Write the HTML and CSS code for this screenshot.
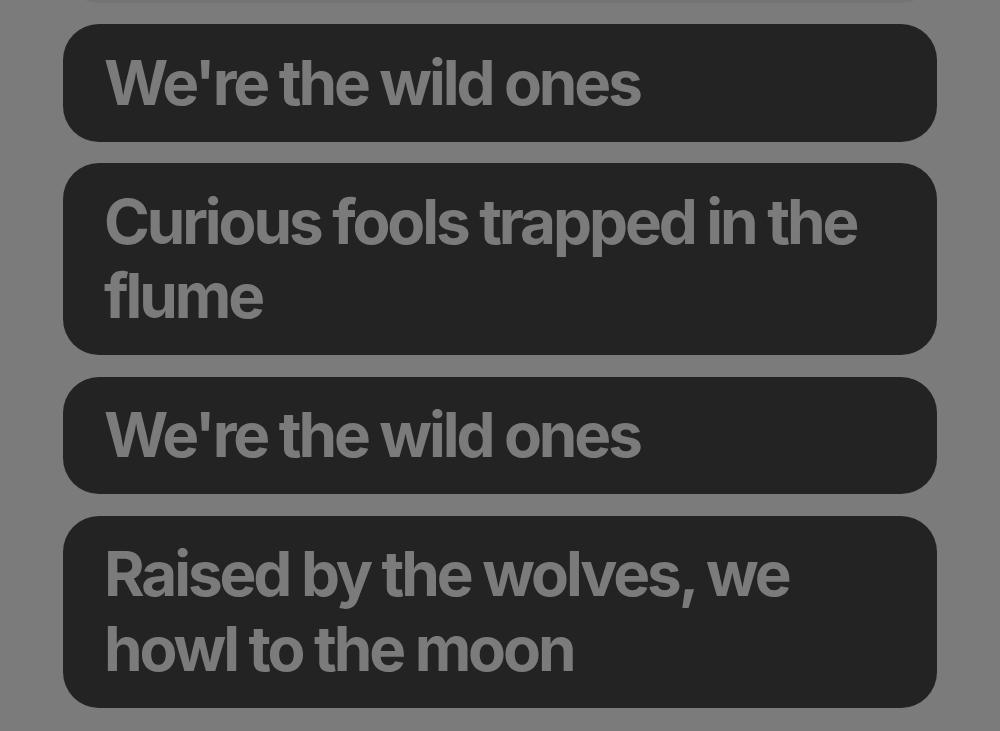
FILE: index.html
```html
<!DOCTYPE html>
<html lang="en">
<head>
<meta charset="utf-8">
<title>Lyrics</title>
<link rel="stylesheet" href="styles.css">
</head>
<body>
<main class="lyrics">
  <div class="line line-past" aria-hidden="true"></div>
  <div class="line"><span>We're the wild ones</span></div>
  <div class="line"><span>Curious fools trapped in the flume</span></div>
  <div class="line"><span>We're the wild ones</span></div>
  <div class="line"><span>Raised by the wolves, we howl to the moon</span></div>
</main>
</body>
</html>
```

FILE: styles.css
```css
html, body {
  margin: 0;
  padding: 0;
  background: #7b7b7b;
  height: 100%;
  overflow: hidden;
}

.lyrics {
  display: flex;
  flex-direction: column;
  gap: 21.5px;
  padding: 0 63px;
  margin-top: -115px;
}

.line {
  background: #232323;
  border-radius: 36px;
  padding: 21.5px 41px;
  font-family: "Inter", "Liberation Sans", sans-serif;
  font-weight: 700;
  font-size: 62px;
  line-height: 74.5px;
  letter-spacing: -0.05em;
  color: #7b7b7b;
}

.line-past {
  background: #747474;
  height: 117.5px;
  box-sizing: border-box;
}
```
